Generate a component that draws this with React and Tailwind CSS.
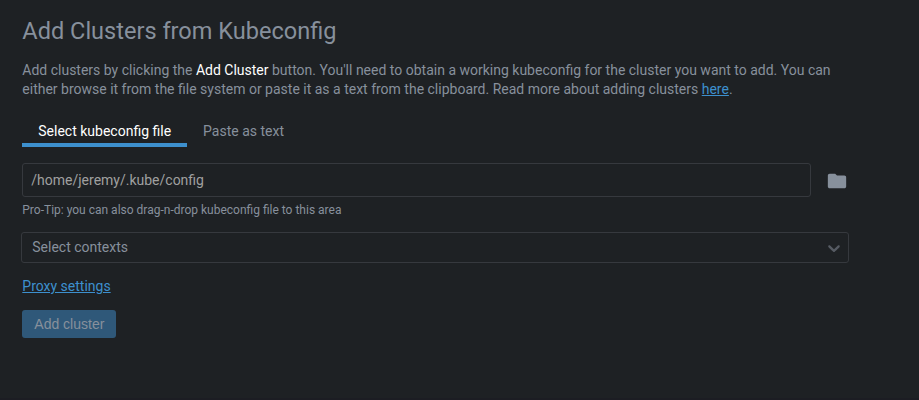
export default function App() {
  return (
    <div className="h-[400px] w-[919px] overflow-hidden border-b-2 border-[#1c1d23] bg-[#1e2124] pt-4 pl-[22.3px] text-sm text-[#87909c] [font-family:Roboto,sans-serif]">
      <main className="flex w-[827px] flex-col items-start">
        <h2 className="text-[23.55px] leading-[30px] font-normal">Add Clusters from Kubeconfig</h2>
        <p className="mt-[15px] w-[827px] leading-[19px]">
          Add clusters by clicking the <span className="text-white">Add Cluster</span> button. You'll need to obtain a working kubeconfig for the cluster you want to add. You can either browse it from the file system or paste it as a text from the clipboard. Read more about adding clusters{" "}
          <a className="text-[#3d90ce] underline">here</a>.
        </p>
        <div className="mt-4 flex h-8 leading-8">
          <div className="border-b-4 border-[#3d90ce] px-4 text-white">Select kubeconfig file</div>
          <div className="px-4">Paste as text</div>
        </div>
        <div className="mt-4 flex w-full items-center">
          <div className="flex h-[34px] w-[789px] items-center rounded-[3px] border border-[#36393e] px-2 text-[#a0a0a0]">/home/jeremy/.kube/config</div>
          <svg className="mt-px ml-[15px] size-[22px]" viewBox="0 0 24 24" fill="#87909c">
            <path d="M10 4H4c-1.1 0-1.99.9-1.99 2L2 18c0 1.1.9 2 2 2h16c1.1 0 2-.9 2-2V8c0-1.1-.9-2-2-2h-8l-2-2z" />
          </svg>
        </div>
        <small className="mt-1 text-xs leading-[18px]">Pro-Tip: you can also drag-n-drop kubeconfig file to this area</small>
        <div className="mt-[13px] -ml-px flex h-[31px] w-[828px] items-center justify-between rounded-[3px] border border-[#36393e] pr-1 pl-2.5">
          <span className="pb-0.5">Select contexts</span>
          <svg className="size-5" viewBox="0 0 20 20" fill="#565b63">
            <path d="M4.516 7.548c0.436-0.446 1.043-0.481 1.576 0l3.908 3.747 3.908-3.747c0.533-0.481 1.141-0.446 1.574 0 0.436 0.445 0.408 1.197 0 1.615-0.406 0.418-4.695 4.502-4.695 4.502-0.217 0.223-0.502 0.335-0.787 0.335s-0.57-0.112-0.789-0.335c0 0-4.287-4.084-4.695-4.502s-0.436-1.17 0-1.615z" />
          </svg>
        </div>
        <a className="mt-3 leading-[22px] text-[#3d90ce] underline">Proxy settings</a>
        <button className="mt-[13px] h-7 rounded-[3px] bg-[#2f5879] px-3 text-[#87909c] [font-family:'Liberation_Sans',Arial,sans-serif]">Add cluster</button>
      </main>
    </div>
  );
}
